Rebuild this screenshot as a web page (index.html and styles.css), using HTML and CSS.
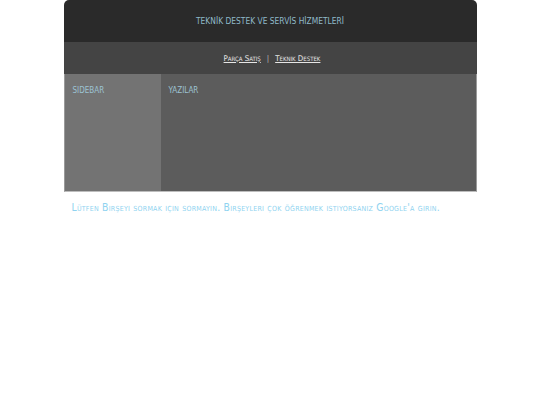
FILE: index.html
```html
<!DOCTYPE html>
<html lang="en">
<head>
<meta charset="utf-8">
<title>Teknik Destek</title>
<link rel="stylesheet" href="styles.css">
</head>
<body>
<div class="wrap">
  <div class="header">TEKNİK DESTEK VE SERVİS HİZMETLERİ</div>
  <div class="nav">
    <a href="#">Parça Satış</a><span class="sep">|</span><a href="#">Teknik Destek</a>
  </div>
  <div class="content">
    <div class="sidebar"><h2>SIDEBAR</h2></div>
    <div class="main"><h2>YAZILAR</h2></div>
  </div>
  <div class="footer">Lütfen Birşeyi sormak için sormayın. Birşeyleri çok öğrenmek istiyorsanız Google'a girin.</div>
</div>
</body>
</html>
```
FILE: styles.css
```css
html, body {
  margin: 0;
  padding: 0;
  background: #ffffff;
}
body {
  font-family: "DejaVu Sans Condensed", "DejaVu Sans", sans-serif;
}
.wrap {
  width: 413px;
  margin: 0 auto;
}
.header {
  height: 42px;
  background: #2a2a2a;
  border-radius: 5px 5px 0 0;
  color: #8fb9c9;
  font-size: 8.4px;
  display: flex;
  align-items: center;
  justify-content: center;
}
.nav {
  height: 32px;
  background: #444444;
  display: flex;
  align-items: center;
  justify-content: center;
  font-size: 7.9px;
  font-variant: small-caps;
  color: #dddddd;
  padding-left: 4px;
}
.nav a {
  color: #e6e6e6;
  text-decoration: underline;
}
.nav .sep {
  margin: 0 6px;
  color: #bbbbbb;
}
.content {
  display: flex;
  height: 117px;
  border-left: 1px solid #9a9a9a;
  border-right: 1px solid #9a9a9a;
  border-bottom: 1px solid #bdbdbd;
}
.sidebar {
  width: 96px;
  background: #737373;
  padding: 12px 8px;
  box-sizing: border-box;
}
.main {
  flex: 1;
  background: #5c5c5c;
  padding: 12px 8px;
  box-sizing: border-box;
}
h2 {
  margin: 0;
  font-weight: normal;
  font-size: 8px;
  color: #9cc3d3;
}
.footer {
  padding: 9px 8px;
  font-size: 10.3px;
  letter-spacing: 0.25px;
  font-variant: small-caps;
  color: #8fd3f0;
}
```
